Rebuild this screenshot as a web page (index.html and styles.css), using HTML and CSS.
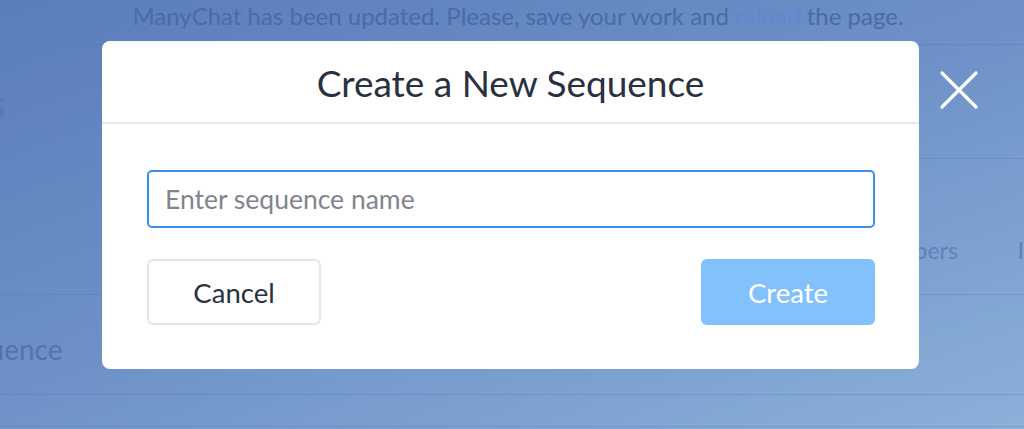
FILE: index.html
```html
<!DOCTYPE html>
<html>
<head>
<meta charset="utf-8">
<link rel="stylesheet" href="styles.css">
</head>
<body>
<div class="page">
  <div class="notice">ManyChat has been updated. Please, save your work and <span class="link">reload</span> the page.</div>
  <div class="rule"></div>
  <div class="top">
    <div class="heading">Sequences</div>
  </div>
  <div class="rule rule-right"></div>
  <div class="cols"><span class="col-a"></span><span class="col-b">Subscribers</span><span class="col-c">I</span></div>
  <div class="rule"></div>
  <div class="row"><span class="row-name">Sequence</span><span class="row-num">0</span></div>
  <div class="rule"></div>
  <div class="row-small"></div>
  <div class="rule"></div>
</div>

<div class="modal">
  <div class="modal-head">Create a New Sequence</div>
  <div class="modal-body">
    <input class="name-input" type="text" placeholder="Enter sequence name">
    <div class="actions">
      <button class="btn btn-cancel">Cancel</button>
      <button class="btn btn-create">Create</button>
    </div>
  </div>
</div>

<button class="close" aria-label="Close">
  <svg width="40" height="40" viewBox="0 0 40 40"><path d="M3 3 L37 37 M37 3 L3 37" stroke="#fff" stroke-width="3.2" stroke-linecap="round" fill="none"/></svg>
</button>
</body>
</html>
```

FILE: styles.css
```css
* { box-sizing: border-box; }
html, body { margin: 0; height: 100%; }
body {
  font-family: Lato, "Open Sans", sans-serif;
  background: linear-gradient(160deg, #5a7dbc 0%, #6b8fc6 45%, #8bb1d9 100%);
  overflow: hidden;
  width: 1024px;
  height: 429px;
}
.page {
  color: #5273ad;
}
.notice {
  text-align: center;
  font-size: 24px;
  height: 44px;
  line-height: 32px;
  color: #4a6ba6;
  padding-left: 12px;
  white-space: nowrap;
}
.notice .link { color: #5f88cf; }
.rule { height: 1px; background: rgba(80, 110, 165, 0.28); }
.rule-right { margin-left: 870px; }
.top { height: 113px; overflow: hidden; }
.heading {
  font-size: 36px;
  line-height: 40px;
  margin-top: 38px;
  margin-left: -164px;
  white-space: nowrap;
  color: #5677b0;
}
.cols {
  display: flex;
  height: 135px;
  padding-top: 76px;
  font-size: 23px;
  line-height: 30px;
}
.col-a { width: 843px; }
.col-b { width: 176px; color: #5f81ba; }
.col-c { color: #5f81ba; }
.row {
  display: flex;
  height: 99px;
  align-items: center;
  font-size: 28px;
  padding-top: 8px;
}
.row-name { margin-left: -57px; width: 955px; color: #5274ad; }
.row-num { color: #88abd4; }
.row-small { height: 31px; }

.modal {
  position: absolute;
  left: 102px;
  top: 41px;
  width: 817px;
  height: 328px;
  background: #fff;
  border-radius: 8px;
}
.modal-head {
  height: 83px;
  border-bottom: 2px solid #e4e9f0;
  text-align: center;
  font-size: 37px;
  line-height: 84px;
  color: #29303f;
}
.modal-body {
  padding: 46px 44px 0 45px;
}
.name-input {
  display: block;
  width: 728px;
  height: 58px;
  border: 2px solid #3a8ff0;
  border-radius: 5px;
  padding: 0 16px;
  font-family: Lato, "Open Sans", sans-serif;
  font-size: 26.5px;
  color: #29303f;
  outline: none;
}
.name-input::placeholder { color: #80858d; }
.actions {
  display: flex;
  justify-content: space-between;
  width: 728px;
  margin-top: 31px;
}
.btn {
  width: 174px;
  height: 66px;
  border-radius: 6px;
  font-family: Lato, "Open Sans", sans-serif;
  font-size: 27.5px;
  cursor: pointer;
  padding: 0;
}
.btn-cancel {
  background: #fff;
  border: 2px solid #e2e7ef;
  color: #29303f;
}
.btn-create {
  background: #83c1fd;
  border: none;
  color: #fff;
}
.close {
  position: absolute;
  left: 939px;
  top: 70px;
  width: 40px;
  height: 40px;
  padding: 0;
  border: none;
  background: none;
}
.close svg { display: block; }
```
